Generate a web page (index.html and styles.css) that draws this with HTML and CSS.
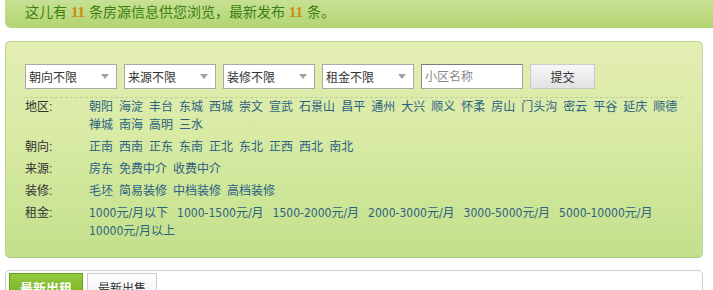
FILE: index.html
```html
<!DOCTYPE html>
<html lang="zh-CN">
<head>
<meta charset="utf-8">
<title>房源筛选</title>
<link rel="stylesheet" href="styles.css">
</head>
<body>
<div class="page">
  <div class="banner">这儿有 <b class="num">11</b> 条房源信息供您浏览，最新发布 <b class="num">11</b> 条。</div>

  <div class="filter">
    <div class="controls">
      <div class="sel">朝向不限<svg class="arrow" width="8" height="5" viewBox="0 0 8 5"><path d="M0 0H8L4 5Z" fill="#a0a0a0"/></svg></div>
      <div class="sel">来源不限<svg class="arrow" width="8" height="5" viewBox="0 0 8 5"><path d="M0 0H8L4 5Z" fill="#a0a0a0"/></svg></div>
      <div class="sel">装修不限<svg class="arrow" width="8" height="5" viewBox="0 0 8 5"><path d="M0 0H8L4 5Z" fill="#a0a0a0"/></svg></div>
      <div class="sel">租金不限<svg class="arrow" width="8" height="5" viewBox="0 0 8 5"><path d="M0 0H8L4 5Z" fill="#a0a0a0"/></svg></div>
      <input class="txt" type="text" placeholder="小区名称">
      <button class="btn" type="button">提交</button>
    </div>

    <div class="rows">
      <div class="row">
        <div class="label">地区:</div>
        <div class="links">
          <a>朝阳</a><a>海淀</a><a>丰台</a><a>东城</a><a>西城</a><a>崇文</a><a>宣武</a><a>石景山</a><a>昌平</a><a>通州</a><a>大兴</a><a>顺义</a><a>怀柔</a><a>房山</a><a>门头沟</a><a>密云</a><a>平谷</a><a>延庆</a><a>顺德</a><a>禅城</a><a>南海</a><a>高明</a><a>三水</a>
        </div>
      </div>
      <div class="row">
        <div class="label">朝向:</div>
        <div class="links">
          <a>正南</a><a>西南</a><a>正东</a><a>东南</a><a>正北</a><a>东北</a><a>正西</a><a>西北</a><a>南北</a>
        </div>
      </div>
      <div class="row">
        <div class="label">来源:</div>
        <div class="links">
          <a>房东</a><a>免费中介</a><a>收费中介</a>
        </div>
      </div>
      <div class="row">
        <div class="label">装修:</div>
        <div class="links">
          <a>毛坯</a><a>简易装修</a><a>中档装修</a><a>高档装修</a>
        </div>
      </div>
      <div class="row">
        <div class="label">租金:</div>
        <div class="links price">
          <a>1000元/月以下</a><a>1000-1500元/月</a><a>1500-2000元/月</a><a>2000-3000元/月</a><a>3000-5000元/月</a><a>5000-10000元/月</a><a>10000元/月以上</a>
        </div>
      </div>
    </div>
  </div>

  <div class="tabbox">
    <div class="tabs">
      <div class="tab active">最新出租</div>
      <div class="tab">最新出售</div>
    </div>
  </div>
</div>
</body>
</html>
```

FILE: styles.css
```css
html, body {
  margin: 0;
  padding: 0;
  background: #ffffff;
}

body {
  font-family: "Liberation Sans", "Noto Sans CJK SC", sans-serif;
  font-size: 12px;
  color: #333333;
}

.page {
  padding: 0 10px 0 5px;
}

.banner {
  margin-right: -10px;
  height: 28px;
  box-sizing: border-box;
  padding-left: 20px;
  line-height: 24px;
  font-size: 14px;
  color: #3d7d14;
  background: linear-gradient(to bottom, #c6e193 0%, #b3d471 100%);
  border-bottom-left-radius: 6px;
  white-space: nowrap;
}

.num {
  font-family: "Liberation Serif", serif;
  font-weight: bold;
  font-size: 15px;
  color: #d08a10;
}

.filter {
  margin-top: 13px;
  border: 1px solid #b7d68a;
  border-right-color: #c4cfb4;
  border-bottom-color: #a9c97c;
  border-radius: 5px;
  background: linear-gradient(to bottom, #e4eeb3 0%, #d8eaa4 45%, #c2e08b 100%);
  padding: 22px 19px 13px 19px;
}

.controls {
  display: flex;
  gap: 7px;
  height: 25px;
}

.sel {
  width: 92px;
  height: 25px;
  box-sizing: border-box;
  border: 1px solid #a8a8a8;
  background: #ffffff;
  display: flex;
  align-items: center;
  padding: 0 7px 0 3px;
  color: #333333;
  font-size: 12px;
}

.arrow {
  margin-left: auto;
}

.txt {
  width: 102px;
  height: 25px;
  box-sizing: border-box;
  margin: 0;
  border: 1px solid #a8a8a8;
  border-top-color: #7c7c7c;
  border-left-color: #8a8a8a;
  padding: 0 3px;
  font-family: inherit;
  font-size: 12px;
  color: #333333;
  background: #ffffff;
  outline: none;
}

.txt::placeholder {
  color: #8a8a8a;
}

.btn {
  width: 65px;
  height: 25px;
  margin: 0;
  box-sizing: border-box;
  border: 1px solid #cbcbcb;
  background: linear-gradient(to bottom, #f7f7f7 0%, #e2e2e2 100%);
  font-family: inherit;
  font-size: 12px;
  color: #333333;
  padding: 0;
}

.rows {
  margin-top: 8px;
  border-top: 1px dashed #bccf9c;
}

.row {
  display: flex;
  line-height: 18px;
  margin-bottom: 4px;
}

.label {
  width: 64px;
  flex: none;
  color: #333333;
}

.links {
  flex: 1;
  display: flex;
  flex-wrap: wrap;
  column-gap: 6px;
}

.links a {
  color: #2b6282;
  text-decoration: none;
  white-space: nowrap;
}

.price {
  column-gap: 9px;
  font-family: "DejaVu Sans Condensed", "Noto Sans CJK SC", sans-serif;
}

.tabbox {
  margin-top: 12px;
  border: 1px solid #cccccc;
  border-radius: 5px;
  background: #ffffff;
  padding: 2px 3px;
  height: 60px;
}

.tabs {
  display: flex;
  gap: 4px;
}

.tab {
  box-sizing: border-box;
  width: 70px;
  line-height: 30px;
  text-align: center;
  border: 1px solid #cccccc;
  background: linear-gradient(to bottom, #ffffff 0%, #eeeeee 100%);
  color: #333333;
  font-size: 12px;
}

.tab.active {
  width: 74px;
  border-color: #65a01a;
  background: linear-gradient(to bottom, #93c93e 0%, #6fab17 100%);
  color: #ffffff;
  font-weight: bold;
  font-size: 13px;
}
```
